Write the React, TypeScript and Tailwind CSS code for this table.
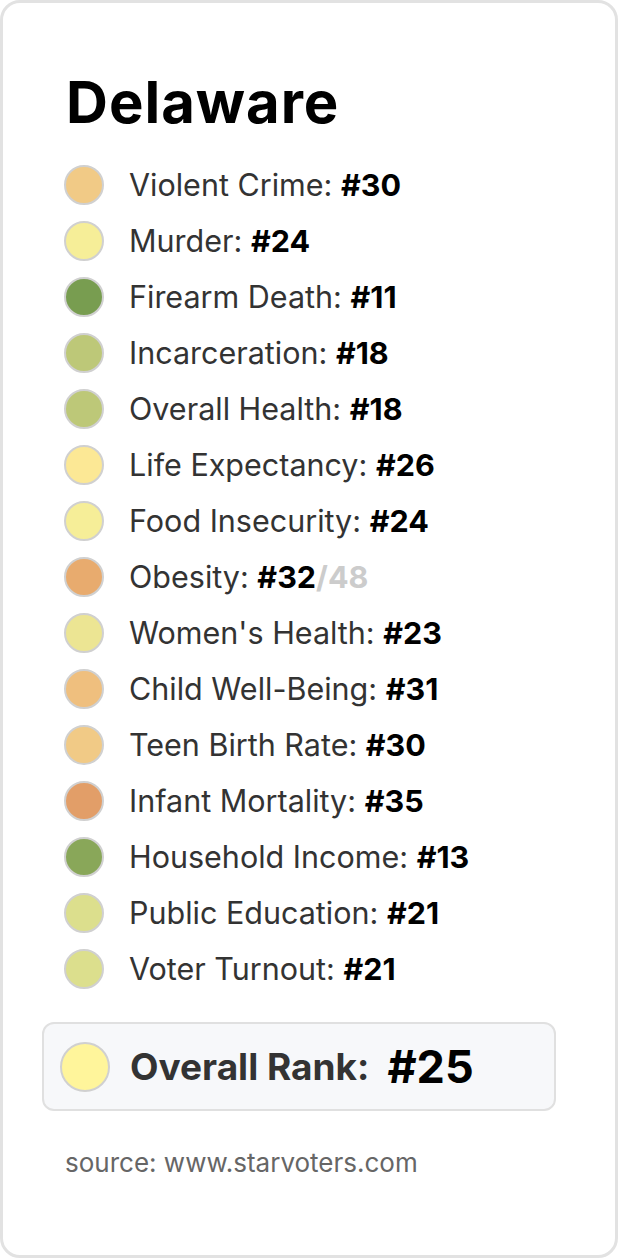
import React from "react";

const rows: { label: string; rank: number; color: string; total?: number }[] = [
  { label: "Violent Crime", rank: 30, color: "bg-[#f1ca86]" },
  { label: "Murder", rank: 24, color: "bg-[#f6ee98]" },
  { label: "Firearm Death", rank: 11, color: "bg-[#789d50]" },
  { label: "Incarceration", rank: 18, color: "bg-[#bdc878]" },
  { label: "Overall Health", rank: 18, color: "bg-[#bdc878]" },
  { label: "Life Expectancy", rank: 26, color: "bg-[#fce895]" },
  { label: "Food Insecurity", rank: 24, color: "bg-[#f6ee98]" },
  { label: "Obesity", rank: 32, color: "bg-[#e8ab6e]", total: 48 },
  { label: "Women's Health", rank: 23, color: "bg-[#ece593]" },
  { label: "Child Well-Being", rank: 31, color: "bg-[#efbf7e]" },
  { label: "Teen Birth Rate", rank: 30, color: "bg-[#f1ca86]" },
  { label: "Infant Mortality", rank: 35, color: "bg-[#e29e68]" },
  { label: "Household Income", rank: 13, color: "bg-[#89a759]" },
  { label: "Public Education", rank: 21, color: "bg-[#dcdf8d]" },
  { label: "Voter Turnout", rank: 21, color: "bg-[#dcdf8d]" },
];

export default function App() {
  return (
    <div className="bg-white w-[620px] h-[1260px]" style={{ fontFamily: "Inter, 'Noto Sans', sans-serif" }}>
      <div className="w-[618px] h-[1258px] border-[3px] border-[#e2e2e2] rounded-[20px] bg-white pt-[64px] pl-[39px]">
        <h1 className="ml-[24px] text-[58px] leading-[70px] font-bold text-black tracking-[1px]">Delaware</h1>
        <div className="mt-[20px] ml-[22px] flex flex-col">
          {rows.map((r) => (
            <div key={r.label} className="flex items-center h-[56px]">
              <div className={`w-[40px] h-[40px] rounded-full border-2 border-[#d0d0d0] ${r.color}`} />
              <div className="ml-[25px] text-[30.5px] leading-[40px] text-[#333333]">
                {r.label}: <span className="font-bold text-black">#{r.rank}</span>
                {r.total ? <span className="font-bold text-[#cccccc]">/{r.total}</span> : null}
              </div>
            </div>
          ))}
        </div>
        <div className="mt-[25px] w-[514px] h-[89px] rounded-[12px] border-2 border-[#e0e0e0] bg-[#f7f8fa] flex items-center pl-[16px]">
          <div className="w-[50px] h-[50px] rounded-full border-2 border-[#d0d0d0] bg-[#fff59b]" />
          <div className="ml-[20px] text-[37px] font-bold text-[#333333]">Overall Rank:</div>
          <div className="ml-[18px] text-[45px] font-bold text-black">#25</div>
        </div>
        <div className="mt-[32px] ml-[23px] text-[26px] text-[#666666]">source: www.starvoters.com</div>
      </div>
    </div>
  );
}
